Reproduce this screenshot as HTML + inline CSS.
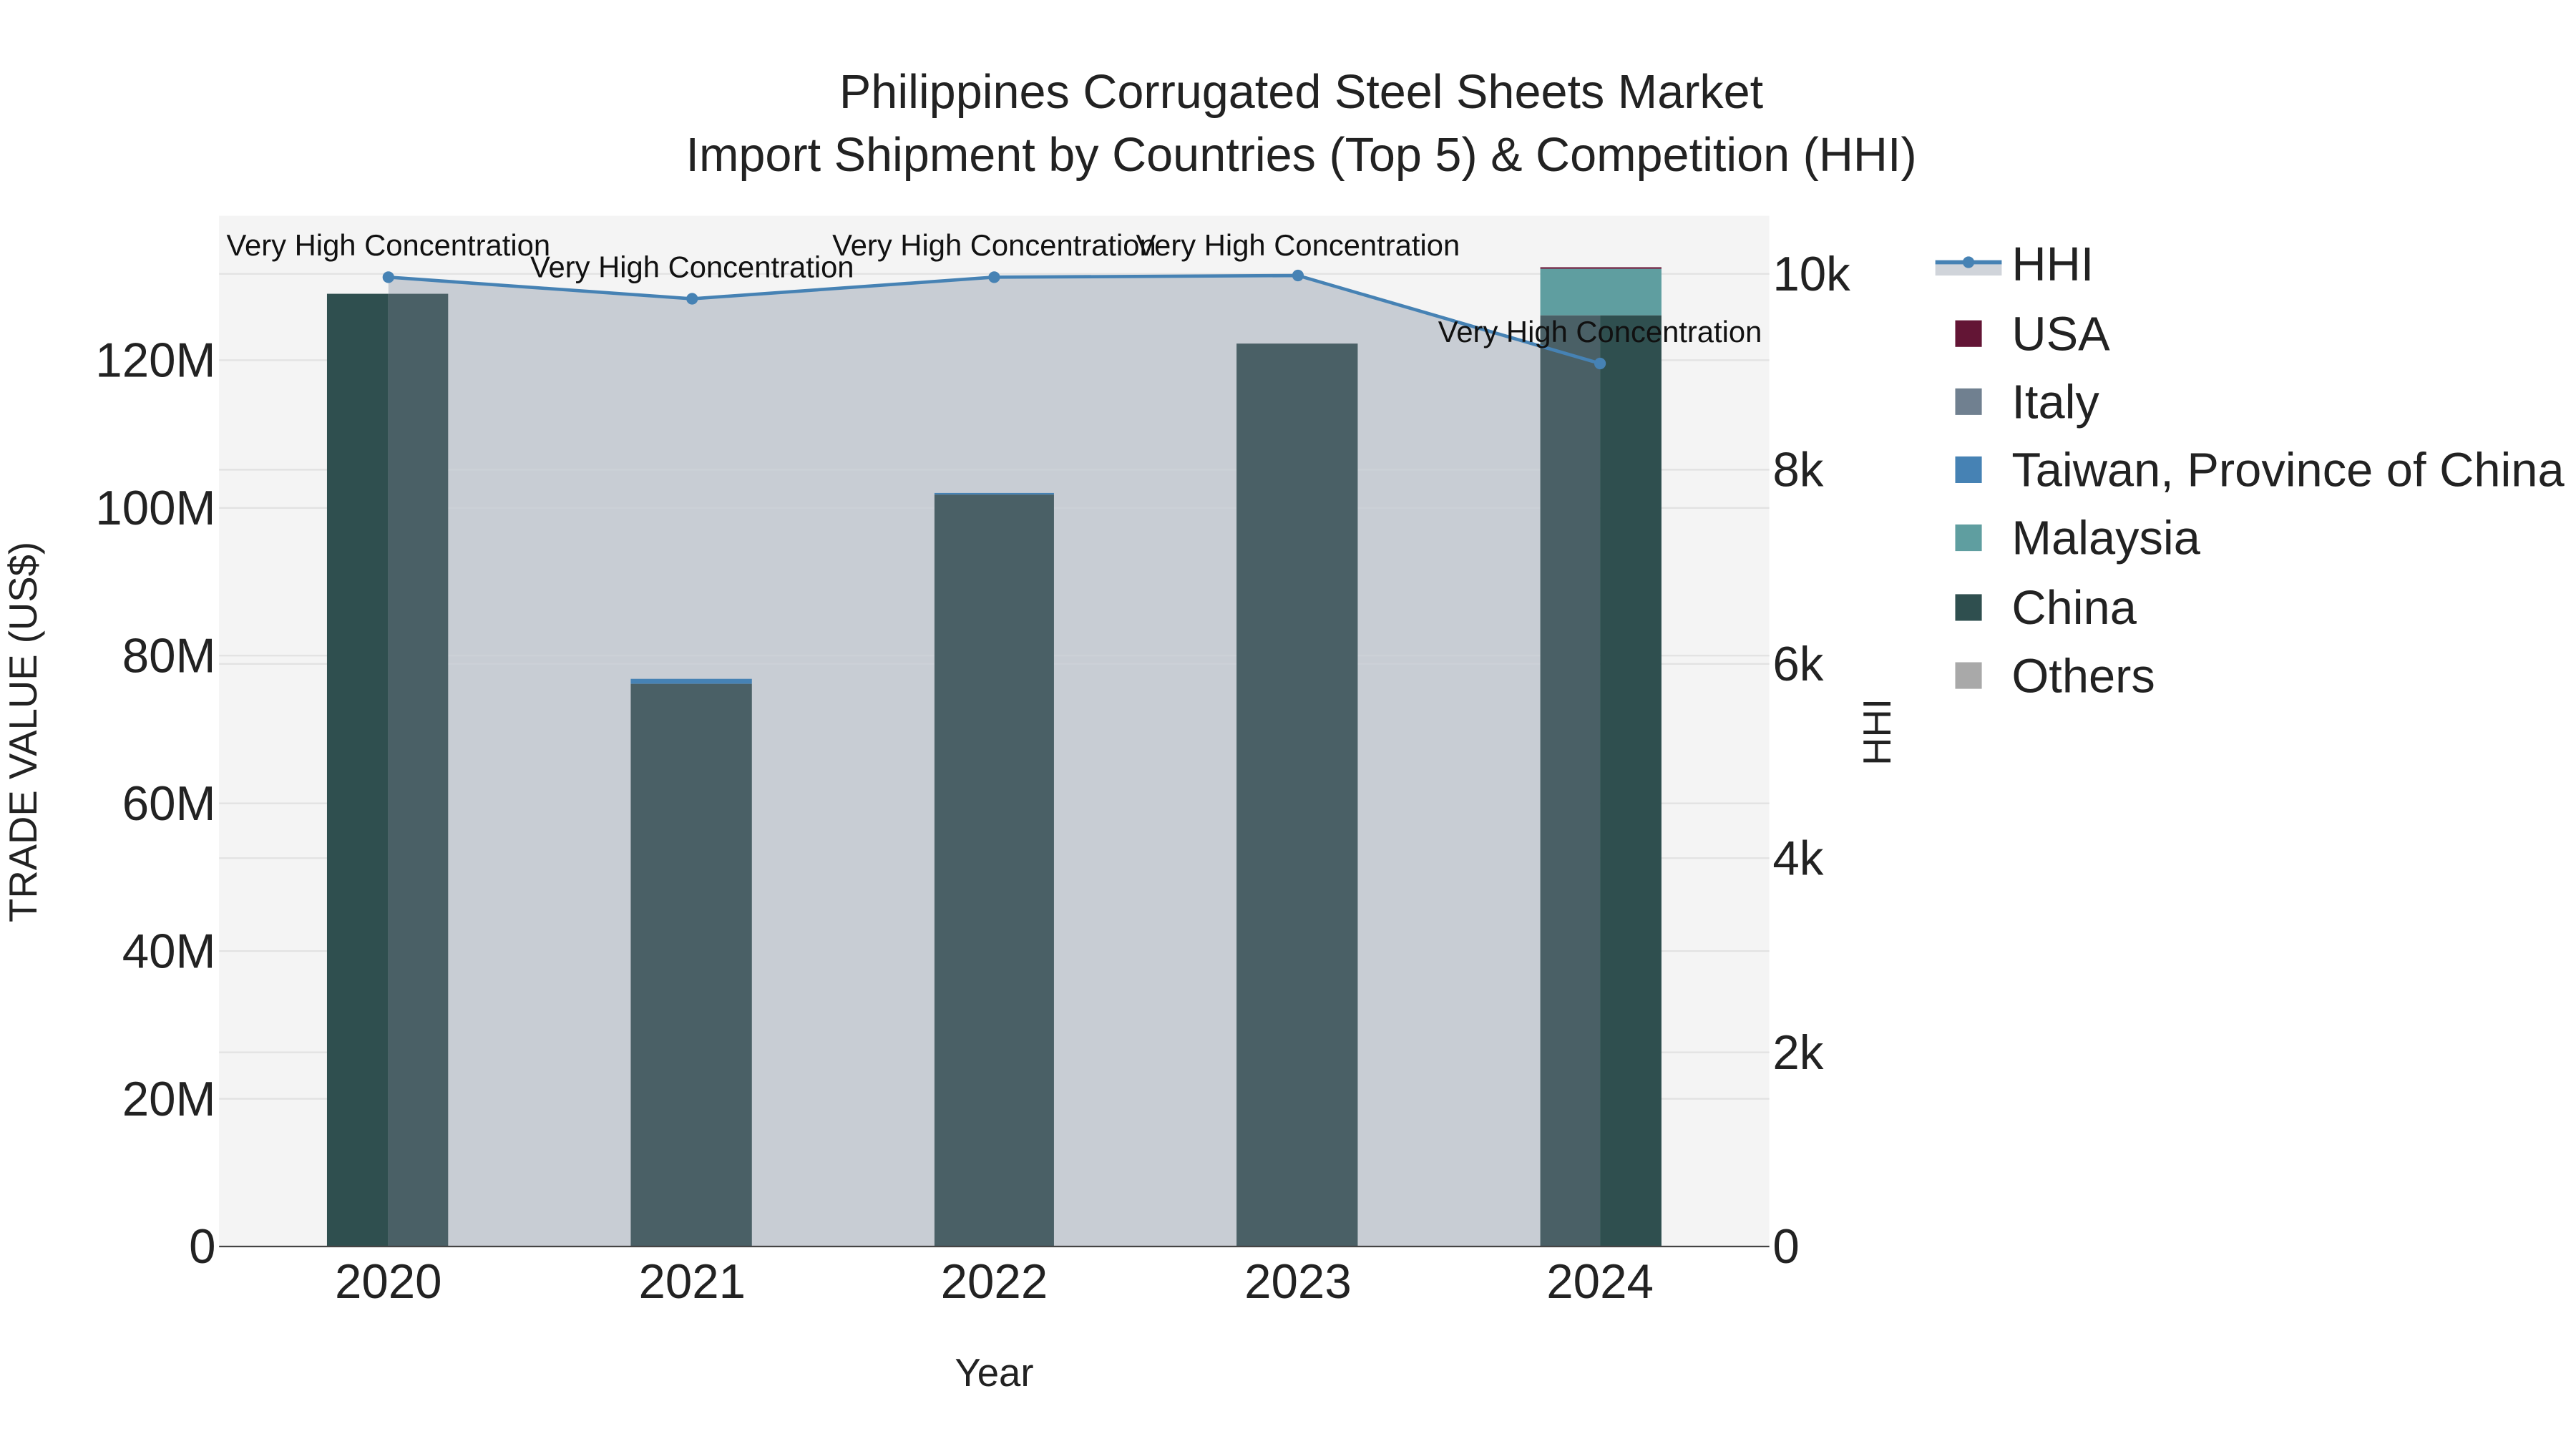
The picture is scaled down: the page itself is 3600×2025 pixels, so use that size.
<!DOCTYPE html>
<html><head><meta charset="utf-8"><style>
html,body{margin:0;padding:0;background:#fff;}
svg{display:block;font-family:"Liberation Sans",Arial,sans-serif;}
</style></head><body>
<svg width="3600" height="2025" viewBox="0 0 1552 873" xmlns="http://www.w3.org/2000/svg">
<rect width="1552" height="873" fill="#fff"/>
<rect x="132" y="130" width="934" height="621" fill="#f4f4f4"/>
<g stroke="#e2e2e2" stroke-width="1">
<line x1="132" x2="1066" y1="662" y2="662"/><line x1="132" x2="1066" y1="573" y2="573"/>
<line x1="132" x2="1066" y1="484" y2="484"/><line x1="132" x2="1066" y1="395" y2="395"/>
<line x1="132" x2="1066" y1="306" y2="306"/><line x1="132" x2="1066" y1="217" y2="217"/>
<line x1="132" x2="1066" y1="634" y2="634"/><line x1="132" x2="1066" y1="517" y2="517"/>
<line x1="132" x2="1066" y1="400" y2="400"/><line x1="132" x2="1066" y1="283" y2="283"/>
<line x1="132" x2="1066" y1="165" y2="165"/>
</g>
<polygon points="234,167 417,180 599,167 782,166 964,219 964,751 234,751" fill="#c8cdd4"/>
<g stroke="#d0d4da" stroke-width="1" opacity="0.6">
<line x1="234" x2="964" y1="400" y2="400"/><line x1="234" x2="964" y1="395" y2="395"/>
<line x1="234" x2="964" y1="283" y2="283"/><line x1="234" x2="964" y1="306" y2="306"/>
</g>
<rect x="197" y="177" width="37" height="574" fill="#2f4f4f"/>
<rect x="234" y="177" width="36" height="574" fill="#4a6066"/>
<rect x="380" y="409" width="73" height="3" fill="#4682b4"/>
<rect x="380" y="412" width="73" height="339" fill="#4a6066"/>
<rect x="563" y="297" width="72" height="1" fill="#4682b4"/>
<rect x="563" y="298" width="72" height="453" fill="#4a6066"/>
<rect x="745" y="207" width="73" height="544" fill="#4a6066"/>
<rect x="928" y="161" width="73" height="1" fill="#6b1a3a"/>
<rect x="928" y="162" width="73" height="28" fill="#5f9ea0"/>
<rect x="928" y="190" width="36" height="561" fill="#4a6066"/>
<rect x="964" y="190" width="37" height="561" fill="#2f4f4f"/>
<line x1="132" x2="1066" y1="751" y2="751" stroke="#444" stroke-width="1"/>
<polyline points="234,167 417,180 599,167 782,166 964,219" fill="none" stroke="#4682b4" stroke-width="2"/>
<g fill="#4682b4"><circle cx="234" cy="167" r="3.5"/><circle cx="417" cy="180" r="3.5"/><circle cx="599" cy="167" r="3.5"/><circle cx="782" cy="166" r="3.5"/><circle cx="964" cy="219" r="3.5"/></g>
<g font-size="18" fill="#111" text-anchor="middle">
<text x="234" y="154">Very High Concentration</text>
<text x="417" y="167">Very High Concentration</text>
<text x="599" y="154">Very High Concentration</text>
<text x="782" y="154">Very High Concentration</text>
<text x="964" y="206">Very High Concentration</text>
</g>
<g font-size="28.7" fill="#222" text-anchor="middle">
<text x="784" y="65">Philippines Corrugated Steel Sheets Market</text>
<text x="784" y="103">Import Shipment by Countries (Top 5) &amp; Competition (HHI)</text>
</g>
<g font-size="29" fill="#222" text-anchor="end">
<text x="130" y="761">0</text><text x="130" y="672">20M</text><text x="130" y="583">40M</text>
<text x="130" y="494">60M</text><text x="130" y="405">80M</text><text x="130" y="316">100M</text><text x="130" y="227">120M</text>
</g>
<g font-size="29" fill="#222">
<text x="1068" y="761">0</text><text x="1068" y="644">2k</text><text x="1068" y="527">4k</text>
<text x="1068" y="410">6k</text><text x="1068" y="293">8k</text><text x="1068" y="175">10k</text>
</g>
<g font-size="29" fill="#222" text-anchor="middle">
<text x="234" y="782">2020</text><text x="417" y="782">2021</text><text x="599" y="782">2022</text><text x="782" y="782">2023</text><text x="964" y="782">2024</text>
</g>
<text x="599" y="835" font-size="23.5" fill="#222" text-anchor="middle">Year</text>
<text transform="translate(22,441) rotate(-90)" font-size="23.5" fill="#222" text-anchor="middle">TRADE VALUE (US$)</text>
<text transform="translate(1139,441) rotate(-90)" font-size="23.5" fill="#222" text-anchor="middle">HHI</text>
<rect x="1166" y="159" width="40" height="7" fill="#d0d4da"/>
<line x1="1166" x2="1206" y1="158" y2="158" stroke="#4682b4" stroke-width="2.5"/>
<circle cx="1186" cy="158" r="3.5" fill="#4682b4"/>
<rect x="1178" y="193" width="16" height="16" fill="#631535"/>
<rect x="1178" y="234" width="16" height="16" fill="#708090"/>
<rect x="1178" y="275" width="16" height="16" fill="#4682b4"/>
<rect x="1178" y="316" width="16" height="16" fill="#5f9ea0"/>
<rect x="1178" y="358" width="16" height="16" fill="#2f4f4f"/>
<rect x="1178" y="399" width="16" height="16" fill="#a9a9a9"/>
<g font-size="28.8" fill="#222">
<text x="1212" y="169">HHI</text><text x="1212" y="211">USA</text><text x="1212" y="252">Italy</text>
<text x="1212" y="293">Taiwan, Province of China</text><text x="1212" y="334">Malaysia</text>
<text x="1212" y="376">China</text><text x="1212" y="417">Others</text>
</g>
</svg>
</body></html>
